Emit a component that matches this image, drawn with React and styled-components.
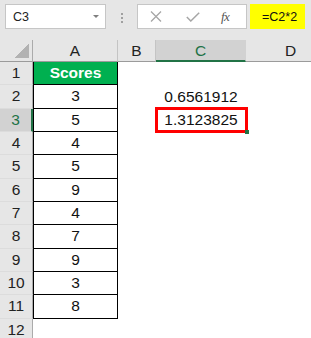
import React from "react";
import styled, { createGlobalStyle } from "styled-components";

const Global = createGlobalStyle`
  html, body { margin: 0; padding: 0; background: #fff; }
  body { font-family: "Liberation Sans", Arial, sans-serif; }
`;

const Frame = styled.div`
  width: 311px;
  height: 338px;
  overflow: hidden;
  background: #fff;
`;

const Toolbar = styled.div`
  height: 40px;
  box-sizing: border-box;
  display: flex;
  align-items: flex-start;
  padding: 4px 0 0 5px;
  background: #e6e6e6;
`;

const NameBox = styled.div`
  width: 101px;
  height: 25px;
  box-sizing: border-box;
  border: 1px solid #c6c6c6;
  background: #fff;
  display: flex;
  align-items: center;
  justify-content: space-between;
  padding: 0 6px 0 7px;
  font-size: 12.5px;
  color: #222;
`;

const Caret = styled.span`
  width: 0;
  height: 0;
  border-left: 3.5px solid transparent;
  border-right: 3.5px solid transparent;
  border-top: 3.5px solid #7f7f7f;
`;

const Dots = styled.div`
  margin: 9px 0 0 15px;
  display: flex;
  flex-direction: column;
  gap: 2px;
`;

const Dot = styled.span`
  width: 2px;
  height: 2px;
  background: #a0a0a0;
`;

const FormulaBox = styled.div`
  margin-left: 14px;
  width: 110px;
  height: 25px;
  box-sizing: border-box;
  border: 1px solid #c6c6c6;
  background: #fff;
  display: flex;
  align-items: center;
  padding-left: 12px;
`;

const IconSlot = styled.span`
  display: flex;
  margin-left: ${(p) => p.$ml || 0}px;
`;

const Fx = styled.span`
  margin-left: 21px;
  font-family: "Liberation Serif", "Times New Roman", serif;
  font-style: italic;
  font-size: 13px;
  color: #555;
  letter-spacing: -0.5px;
`;

const Highlight = styled.div`
  margin-left: 3px;
  width: 55px;
  height: 25px;
  box-sizing: border-box;
  background: #ffff00;
  display: flex;
  align-items: center;
  padding-left: 12px;
  font-size: 12.5px;
  color: #111;
`;

const Sheet = styled.div`
  display: grid;
  grid-template-columns: 33px 85px 38px 90px 90px;
  grid-template-rows: 22px repeat(12, 23.333px);
  background: #fff;
  font-size: 15.5px;
`;

const Corner = styled.div`
  position: relative;
  z-index: 1;
  box-sizing: border-box;
  background: #e6e6e6;
  border-right: 1px solid #ababab;
  border-bottom: 1px solid #9b9b9b;
  display: flex;
  align-items: flex-end;
  justify-content: flex-end;
  padding: 0 3px 3px 0;
`;

const CornerMark = styled.span`
  display: block;
  flex: none;
  width: 15px;
  height: 14px;
  background: linear-gradient(to top left, #b2b2b2 50%, transparent 50%);
`;

const ColHeader = styled.div`
  box-sizing: border-box;
  background: ${(p) => (p.$sel ? "#d2d2d2" : "#e6e6e6")};
  border-right: 1px solid ${(p) => (p.$sel ? "#d2d2d2" : "#c4c4c4")};
  border-bottom: ${(p) => (p.$sel ? "2px solid #217346" : "1px solid #9b9b9b")};
  color: ${(p) => (p.$sel ? "#217346" : "#222")};
  display: flex;
  align-items: center;
  justify-content: center;
  padding-top: ${(p) => (p.$sel ? "1px" : "0")};
`;

const RowHeader = styled.div`
  box-sizing: border-box;
  background: ${(p) => (p.$sel ? "#d2d2d2" : "#e6e6e6")};
  border-right: ${(p) => (p.$sel ? "2px solid #217346" : "1px solid #ababab")};
  border-bottom: 1px solid #dcdcdc;
  color: ${(p) => (p.$sel ? "#217346" : "#222")};
  display: flex;
  align-items: center;
  justify-content: center;
`;

const Cell = styled.div`
  position: relative;
  z-index: ${(p) => (p.$top ? 2 : "auto")};
  box-sizing: border-box;
  display: flex;
  align-items: center;
  justify-content: center;
  color: #111;
  background: ${(p) => p.$fill || "#fff"};
  font-weight: ${(p) => (p.$bold ? 700 : 400)};
  ${(p) =>
    p.$boxed &&
    `border-left: 1px solid #000; border-right: 1px solid #000; border-bottom: 1px solid #000;`}
  ${(p) => p.$white && `color: #fff;`}
`;

const RedBox = styled.div`
  position: absolute;
  top: -2px;
  left: -1px;
  right: -2px;
  bottom: -1px;
  border: 3px solid #ff0000;
  pointer-events: none;
`;

const FillHandle = styled.span`
  position: absolute;
  right: -3px;
  bottom: -2px;
  width: 4px;
  height: 4px;
  background: #217346;
`;

const scores = [3, 5, 4, 5, 9, 4, 7, 9, 3, 8];
const cols = ["A", "B", "C", "D"];
const cValues = { 2: "0.6561912", 3: "1.3123825" };

export default function App() {
  const rows = Array.from({ length: 12 }, (_, i) => i + 1);
  return (
    <Frame>
      <Global />
      <Toolbar>
        <NameBox>
          <span>C3</span>
          <Caret />
        </NameBox>
        <Dots>
          <Dot />
          <Dot />
          <Dot />
        </Dots>
        <FormulaBox>
          <IconSlot>
            <svg width="12" height="11" viewBox="0 0 12 11">
              <path d="M1 0.5 L11 10.5 M11 0.5 L1 10.5" stroke="#a6a6a6" strokeWidth="1.3" fill="none" />
            </svg>
          </IconSlot>
          <IconSlot $ml={24}>
            <svg width="14" height="10" viewBox="0 0 14 10">
              <path d="M0.8 5 L4.8 9 L13.2 0.8" stroke="#a6a6a6" strokeWidth="1.5" fill="none" />
            </svg>
          </IconSlot>
          <Fx>fx</Fx>
        </FormulaBox>
        <Highlight>=C2*2</Highlight>
      </Toolbar>
      <Sheet>
        <Corner>
          <CornerMark />
        </Corner>
        {cols.map((c) => (
          <ColHeader key={c} $sel={c === "C"}>
            {c}
          </ColHeader>
        ))}
        {rows.map((r) => (
          <React.Fragment key={r}>
            <RowHeader $sel={r === 3}>{r}</RowHeader>
            {r === 1 ? (
              <Cell $boxed $fill="#00b050" $bold $white>
                Scores
              </Cell>
            ) : r <= 11 ? (
              <Cell $boxed>{scores[r - 2]}</Cell>
            ) : (
              <Cell />
            )}
            <Cell />
            <Cell $top={r === 3}>
              {cValues[r] || ""}
              {r === 3 && (
                <>
                  <RedBox />
                  <FillHandle />
                </>
              )}
            </Cell>
            <Cell />
          </React.Fragment>
        ))}
      </Sheet>
    </Frame>
  );
}
